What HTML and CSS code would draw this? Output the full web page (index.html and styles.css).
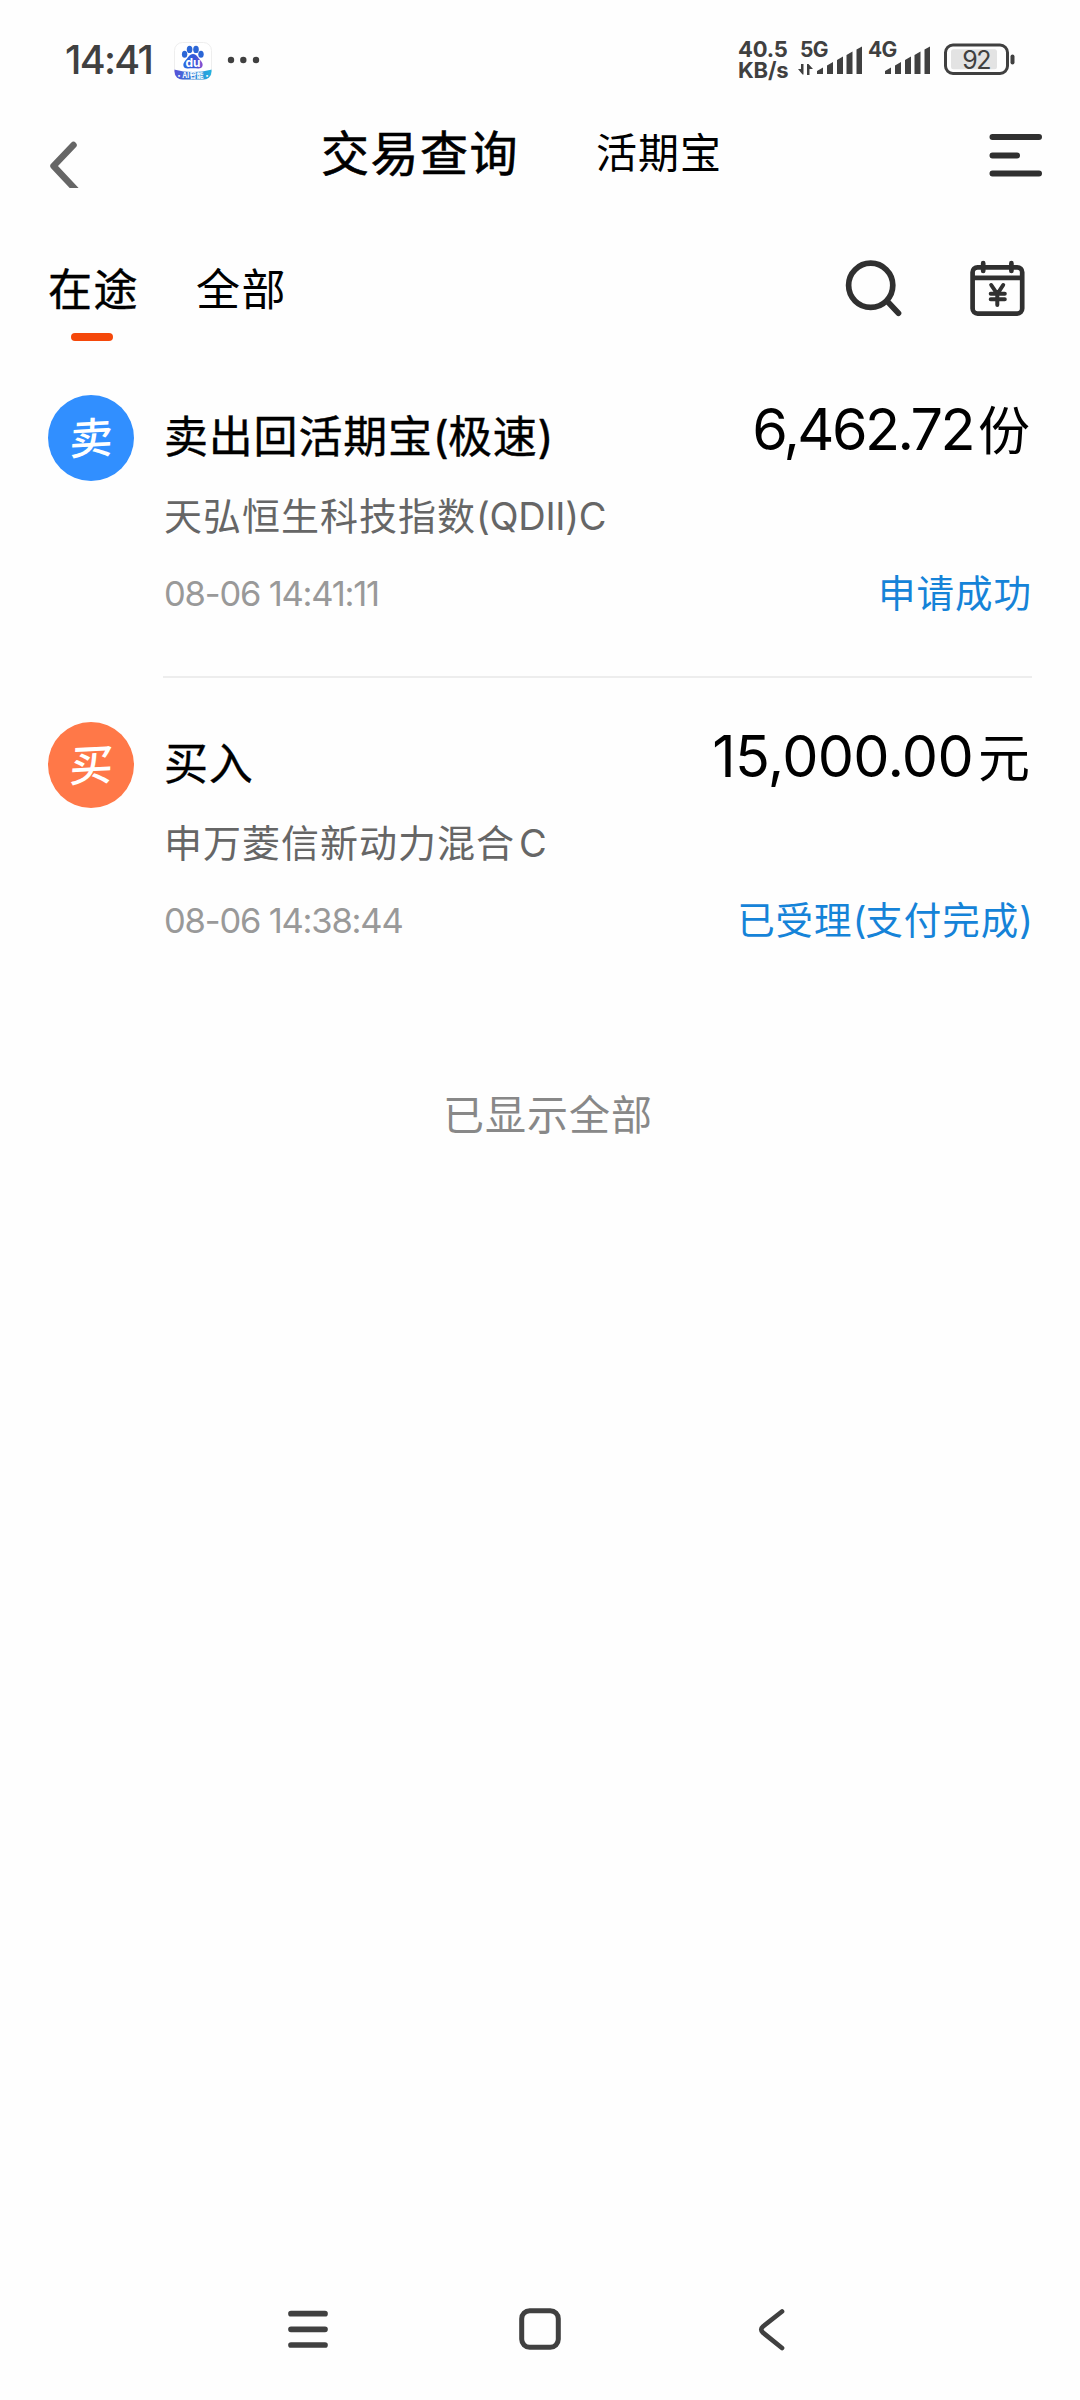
FILE: index.html
```html
<!DOCTYPE html>
<html lang="zh-CN">
<head>
<meta charset="utf-8">
<title>交易查询</title>
<link rel="stylesheet" href="styles.css">
</head>
<body>
<div class="status-bar">
  <div class="status-left">
    <span class="clock">14:41</span>
    <svg class="app-badge" width="38" height="38" viewBox="0 0 38 38">
      <defs>
        <linearGradient id="paw" x1="0" y1="0" x2="1" y2="0"><stop offset="0" stop-color="#2a6be0"/><stop offset=".6" stop-color="#3558d8"/><stop offset="1" stop-color="#8a4fd0"/></linearGradient>
        <linearGradient id="band" x1="0" y1="0" x2="1" y2="0"><stop offset="0" stop-color="#5a50d8"/><stop offset=".5" stop-color="#2f7fd8"/><stop offset="1" stop-color="#22b4e0"/></linearGradient>
        <clipPath id="tile"><rect x=".5" y=".5" width="37" height="37" rx="8"/></clipPath>
      </defs>
      <rect x=".5" y=".5" width="37" height="37" rx="8" fill="#fff" stroke="#eee"/>
      <g fill="#2b66d6"><ellipse cx="10.6" cy="12.3" rx="2.700" ry="3.500"/><ellipse cx="15.6" cy="7.400" rx="2.800" ry="3.700"/><ellipse cx="22" cy="7.400" rx="2.800" ry="3.700"/><ellipse cx="27" cy="12.3" rx="2.700" ry="3.500"/></g>
      <path d="M19 12c4 0 5 4 8 7 3.500 4 1 8-3 7.500-3-.5-7-.5-10 0-4 .5-6.500-3.500-3-7.500 3-3 4-7 8-7z" fill="url(#paw)"/>
      <path d="M0 27.500q19 5 38 0V38H0z" fill="url(#band)" clip-path="url(#tile)"/>
      <text x="19" y="24.500" text-anchor="middle" class="badge-du">du</text>
      <text x="19" y="35.500" text-anchor="middle" class="badge-ai">·AI智能·</text>
    </svg>
    <svg class="dots" width="32" height="8" viewBox="0 0 32 8" fill="#404040"><circle cx="4" cy="4" r="3.200"/><circle cx="16.300" cy="4" r="3.200"/><circle cx="29" cy="4" r="3.200"/></svg>
  </div>
  <div class="status-right">
    <div class="speed"><span>40.5</span><span>KB/s</span></div>
    <svg class="signal" width="64" height="36" viewBox="0 0 64 36" fill="#404040">
      <text x="1" y="16" class="net">5G</text>
      <path d="M4.500 23v10.500h-1l-4.500-5.500h3V23zM8 34V23h1.500l4.500 5h-3.500v6z"/>
      <path d="M18 33v-3l6-3.500V33zM28 33V24.500l6-3.500v12zM38 33V19l6-3.500V33zM47.500 33V14l6-3.500V33zM57.500 33V8.500l5.500-3V33z"/>
    </svg>
    <svg class="signal signal-second" width="64" height="36" viewBox="0 0 64 36" fill="#404040">
      <text x="1" y="16" class="net">4G</text>
      <path d="M18 33v-3l6-3.500V33zM28 33V24.500l6-3.500v12zM38 33V19l6-3.500V33zM47.500 33V14l6-3.500V33zM57.500 33V8.500l5.500-3V33z"/>
    </svg>
    <svg class="battery" width="71" height="32" viewBox="0 0 71 32">
      <rect x="1.500" y="2" width="62" height="28.500" rx="7.500" fill="none" stroke="#404040" stroke-width="3"/>
      <rect x="7" y="6.300" width="46" height="20" rx="2.500" fill="#e3e3e3"/>
      <rect x="66.500" y="11.500" width="4" height="10" rx="2" fill="#404040"/>
      <text x="32" y="26" text-anchor="middle" class="charge">92</text>
    </svg>
  </div>
</div>

<header class="header">
  <svg class="back" width="32" height="47" viewBox="0 0 32 47"><path d="M25.500 4L5.500 25 28 49" fill="none" stroke="#666" stroke-width="6.500" stroke-linecap="round" stroke-linejoin="round"/></svg>
  <div class="titles"><span class="title-main">交易查询</span><span class="title-alt">活期宝</span></div>
  <svg class="menu" width="54" height="44" viewBox="0 0 54 44"><path d="M3.500 4H50M3.500 22.500H28M3.500 40.500H50" stroke="#303030" stroke-width="6" stroke-linecap="round"/></svg>
</header>

<nav class="tabs">
  <div class="tab tab-active">在途</div>
  <div class="tab">全部</div>
  <svg class="search" width="58" height="60" viewBox="0 0 58 60"><g fill="none" stroke="#303030" stroke-width="5.700" stroke-linecap="round"><circle cx="26.700" cy="26.300" r="22.100"/><path d="M43 42L54.500 54.200"/></g></svg>
  <svg class="calendar" width="56" height="58" viewBox="0 0 56 58"><g fill="none" stroke="#303030" stroke-width="4.700" stroke-linecap="round" stroke-linejoin="round"><rect x="2.600" y="7.300" width="49.600" height="46.300" rx="5"/><path d="M3 17.800H52" stroke-linecap="butt"/><path d="M13.200 3.200V11M41.400 3.200V11"/><path d="M21.200 25L27.300 34 33.200 25M20.700 33.700H34.800M20.700 39.300H34.800M27.300 34V45" stroke-width="4"/></g></svg>
</nav>

<main>
  <section class="record record-divided">
    <div class="avatar avatar-sell"><span>卖</span></div>
    <div class="info">
      <div class="summary"><span class="name">卖出回活期宝<span class="paren">(</span>极速<span class="paren">)</span></span><span class="amount"><span class="num num-shares">6,462.72</span>份</span></div>
      <div class="fund">天弘恒生科技指数<span class="fund-class">(QDII)C</span></div>
      <div class="detail"><span class="time">08-06 14:41:11</span><span class="state">申请成功</span></div>
    </div>
  </section>
  <section class="record">
    <div class="avatar avatar-buy"><span>买</span></div>
    <div class="info">
      <div class="summary"><span class="name">买入</span><span class="amount"><span class="num num-money">15,000.00</span>元</span></div>
      <div class="fund">申万菱信新动力混合<span class="fund-class fund-class-single">C</span></div>
      <div class="detail"><span class="time">08-06 14:38:44</span><span class="state">已受理<span class="paren-small">(</span>支付完成<span class="paren-small">)</span></span></div>
    </div>
  </section>
  <p class="end">已显示全部</p>
</main>

<footer class="navbar">
  <svg class="nav-menu" width="42" height="42" viewBox="0 0 42 42"><path d="M4 5.700H38M4 21.300H38M4 37H38" stroke="#404040" stroke-width="5.700" stroke-linecap="round"/></svg>
  <svg class="nav-home" width="42" height="42" viewBox="0 0 42 42"><rect x="2.700" y="2.700" width="36.600" height="36.600" rx="8" fill="none" stroke="#404040" stroke-width="5"/></svg>
  <svg class="nav-back" width="28" height="44" viewBox="0 0 28 44"><path d="M25 3.500L6 18.500Q2.500 21.500 6 24.700L25 40" fill="none" stroke="#404040" stroke-width="4.700" stroke-linecap="round" stroke-linejoin="round"/></svg>
</footer>
</body>
</html>
```
FILE: styles.css
```css
* { box-sizing: border-box; }
body {
  margin: 0;
  width: 1080px;
  height: 2400px;
  display: flex;
  flex-direction: column;
  background: #fefefe;
  color: #000;
  font-family: Inter, "Noto Sans CJK SC", sans-serif;
}
svg { display: block; flex: none; overflow: visible; }

/* Status bar */
.status-bar { height: 120px; display: flex; justify-content: space-between; padding: 0 65px; color: #404040; }
.status-left, .status-right { display: flex; align-items: flex-start; }
.clock { font-size: 39.5px; font-weight: 500; line-height: 40px; margin-top: 40px; width: 109px; letter-spacing: -1.7px; }
.app-badge { margin-top: 42px; }
.badge-du { font: 700 12px Inter, sans-serif; fill: #fff; }
.badge-ai { font: 700 7px "Noto Sans CJK SC", sans-serif; fill: #fff; }
.dots { margin: 56px 0 0 15px; }
.speed { width: 61px; margin-top: 39px; display: flex; flex-direction: column; font-size: 22px; font-weight: 700; line-height: 20.5px; letter-spacing: -0.2px; }
.net { font: 700 21px Inter, sans-serif; letter-spacing: -0.7px; }
.signal { margin-top: 41px; }
.signal-second { margin-left: 4px; }
.battery { margin: 43px 0 0 13px; }
.charge { font: 400 25px Inter, sans-serif; fill: #404040; letter-spacing: -1.5px; }

/* Page header */
.header { height: 110px; display: flex; align-items: flex-start; padding: 0 37px 0 48px; }
.back { margin-top: 21px; overflow: hidden; }
.titles { flex: 1; display: flex; padding-left: 241px; line-height: 61px; font-family: "Noto Sans CJK SC", sans-serif; }
.title-main { font-size: 48px; -webkit-text-stroke: 0.6px #000; letter-spacing: 1.5px; width: 275px; }
.title-alt { font-size: 41px; letter-spacing: 1px; }
.menu { margin-top: 13px; }

/* Tabs */
.tabs { height: 150px; display: flex; align-items: flex-start; padding: 26px 54px 0 48px; }
.tab { font-family: "Noto Sans CJK SC", sans-serif; font-size: 44px; letter-spacing: 1.5px; line-height: 62px; margin-right: 57px; }
.tab-active { -webkit-text-stroke: 0.4px #000; }
.tab-active::after { content: ""; display: block; width: 42px; height: 8px; border-radius: 4px; background: #f5480a; margin: 15px 0 0 23px; }
.search { margin: 3px 0 0 auto; }
.calendar { margin: 4px 0 0 68px; }

/* Transaction records */
.record { height: 327px; margin: 0 48px; display: flex; align-items: flex-start; gap: 29px; padding-top: 15px; }
.avatar { flex: none; width: 86px; height: 86px; border-radius: 50%; display: flex; align-items: center; justify-content: center; color: #fff; font: 500 43px/60px "Noto Sans CJK SC", sans-serif; }
.avatar span { transform: translateY(-3px) skewX(-6deg) rotate(-3deg); }
.avatar-sell { background: #318fff; }
.avatar-buy { background: #ff7848; }
.info { flex: 1; height: 283px; padding-left: 1px; }
.record-divided .info { border-bottom: 2px solid #ededed; }
.summary { height: 72px; }
.summary, .detail { display: flex; justify-content: space-between; align-items: flex-start; }
.name { font-size: 44px; letter-spacing: 0.8px; line-height: 60px; margin-top: 12px; -webkit-text-stroke: 0.4px #000; }
.paren { letter-spacing: -1px; }
.amount { font-size: 52px; line-height: 60px; margin: 4px 2px 0 0; }
.num { font-size: 57.5px; }
.num-shares { letter-spacing: -2.6px; margin-right: 5px; }
.num-money { letter-spacing: -0.7px; margin-right: 5px; }
.fund { font-size: 38px; letter-spacing: 1px; line-height: 50px; margin-top: 24px; color: #666; }
.fund-class { letter-spacing: -0.3px; }
.fund-class-single { margin-left: 4px; }
.detail { margin-top: 28px; line-height: 50px; }
.time { font-size: 34.5px; letter-spacing: -1.2px; color: #999; }
.state { font-size: 37.5px; letter-spacing: 1px; color: #1583d8; }
.paren-small { letter-spacing: -1px; }
.end { margin: 51px 0 0; padding-left: 16px; text-align: center; font-size: 41px; letter-spacing: 1px; line-height: 60px; color: #888; }

/* System navigation */
.navbar { margin-top: auto; height: 92px; display: flex; align-items: flex-start; padding-left: 287px; }
.nav-home { margin-left: 189.500px; }
.nav-back { margin-left: 196.500px; }
```
